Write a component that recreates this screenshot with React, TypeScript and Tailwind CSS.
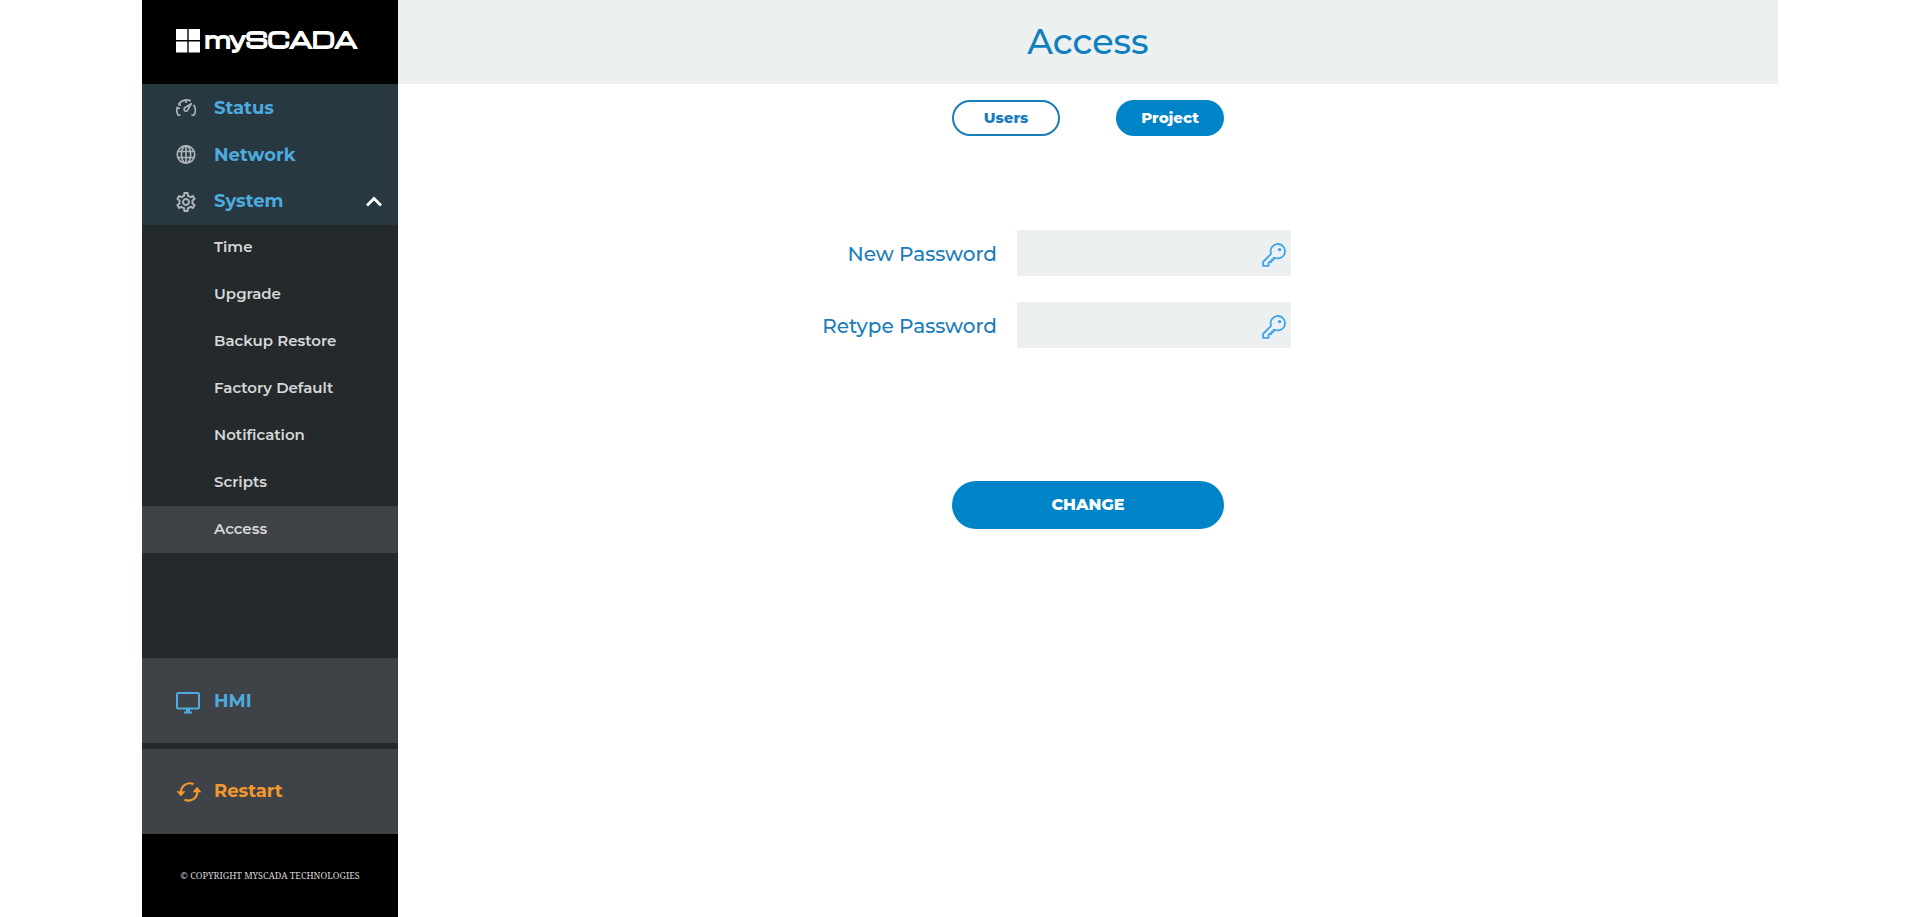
import { useState } from 'react';
import { MdOutlineSettings } from 'react-icons/md';

const SYSTEM_ITEMS = [
  'Time',
  'Upgrade',
  'Backup Restore',
  'Factory Default',
  'Notification',
  'Scripts',
  'Access',
];

const GaugeIcon = () => (
  <svg className="w-5 h-5" viewBox="0 0 20 20" fill="none" stroke="currentColor" strokeWidth="1.7" strokeLinecap="round">
    <path d="M4 17 2.4 17.4A9.2 9.2 0 0 1 1.2 9.4M2.8 6.2A9.2 9.2 0 0 1 14 2.6M18 7.4A9.2 9.2 0 0 1 17.6 17.4L16 17" />
    <path d="M10 2.2v2M1.2 10.2h2M2.8 6.2l1.4 1" />
    <path d="M15.4 5.6 11.6 12.2A1.9 1.9 0 1 1 8.8 9.7Z" strokeLinejoin="round" />
  </svg>
);

const GlobeIcon = () => (
  <svg className="w-5 h-5" viewBox="0 0 20 20" fill="none" stroke="currentColor" strokeWidth="1.7">
    <circle cx="10" cy="9.5" r="8.7" />
    <ellipse cx="10" cy="9.5" rx="4.6" ry="8.7" />
    <path d="M10 .8v17.4M1.8 6.5h16.4M1.8 12.5h16.4" />
  </svg>
);

const MonitorIcon = () => (
  <svg className="w-6 h-6" viewBox="0 0 24 24" fill="none" stroke="currentColor" strokeWidth="2">
    <rect x="1" y="3" width="22" height="15.5" rx="1" />
    <path d="M8 22.5h8" />
    <path d="M12 18v4" strokeWidth="4" />
  </svg>
);

const RestartIcon = () => (
  <svg className="w-6 h-6 overflow-visible" viewBox="0 0 24 24" fill="none" stroke="currentColor" strokeWidth="2.2">
    <path d="M17.5 4.2A8.8 8.8 0 0 0 4.9 11.8" />
    <path d="M8.5 19.6A8.8 8.8 0 0 0 21.3 12" />
    <path d="M.5 11.2h9L5 16.2ZM16.5 12.2h9L21 6.8Z" fill="currentColor" stroke="none" />
  </svg>
);

const KeyIcon = () => (
  <svg className="h-6 w-6" viewBox="0 0 24 24" fill="none" stroke="currentColor" strokeWidth="1.8" strokeLinejoin="round">
    <path d="M9.1 10.8A7.2 7.2 0 1 1 13.4 15H11.4V17H9.4V19H7.4L6.6 19.8V22.8H1V19Z" />
    <circle cx="17.6" cy="6.6" r="1.7" fill="currentColor" stroke="none" />
  </svg>
);

const ChevronIcon = () => (
  <svg className="w-4 h-4" viewBox="0 0 16 16" fill="none" stroke="currentColor" strokeWidth="2.8">
    <path d="M1 11.5 8 4.5 15 11.5" />
  </svg>
);

const Logo = () => (
  <a href="#home" className="flex h-[84px] items-center gap-[5px] bg-black pb-0.5 pl-[34px] text-white">
    <svg className="w-6 h-6 shrink-0" viewBox="0 0 24 24" fill="currentColor">
      <path d="M0 0h11.3v11H0zM12.7 0H24v11H12.7zM0 12.4h11.3v11H0zM12.7 12.4H24v11H12.7z" />
    </svg>
    <span className="pb-1 font-['Michroma','Orbitron','Audiowide','DejaVu_Sans',sans-serif] text-[21px] leading-6 font-bold [-webkit-text-stroke:1px_white]">
      mySCADA
    </span>
  </a>
);

interface NavLinkProps {
  label: string;
  icon: React.ReactNode;
}

const NavLink = ({ label, icon }: NavLinkProps) => (
  <a href={`#${label.toLowerCase()}`} className="flex h-[47px] items-center bg-[#283841] pt-px pl-[34px] text-[18px] font-bold text-[#4cabdf]">
    <span className="w-[38px] text-[#adb3b8]">{icon}</span>
    {label}
  </a>
);

const Sidebar = () => {
  const [open, setOpen] = useState(true);

  return (
    <aside className="flex w-64 shrink-0 flex-col bg-[#24292c]">
      <Logo />
      <nav className="flex-1">
        <NavLink label="Status" icon={<GaugeIcon />} />
        <NavLink label="Network" icon={<GlobeIcon />} />
        <button
          type="button"
          aria-expanded={open}
          onClick={() => setOpen(!open)}
          className="flex h-[47px] w-full items-center bg-[#283841] pr-4 pl-[34px] text-[18px] font-bold text-[#4cabdf]"
        >
          <span className="w-[38px] text-[#adb3b8]">
            <MdOutlineSettings className="-ml-0.5 h-6 w-6" />
          </span>
          System
          <span className="ml-auto text-white">
            <ChevronIcon />
          </span>
        </button>
        {open && (
          <ul className="-mt-px">
            {SYSTEM_ITEMS.map((item) => (
              <li key={item}>
                <a
                  href={`#${item.toLowerCase().replace(' ', '-')}`}
                  className={`flex h-[47px] items-center pl-[72px] text-[15px] font-semibold text-[#d6d8d9] ${item === 'Access' ? 'bg-[#3f4246]' : ''}`}
                >
                  {item}
                </a>
              </li>
            ))}
          </ul>
        )}
      </nav>
      <div className="flex flex-col gap-1.5">
        <a href="#hmi" className="flex h-[85px] items-center bg-[#3f4246] pt-0.5 pl-[34px] text-[18px] font-bold text-[#4cabdf]">
          <span className="w-[38px]">
            <MonitorIcon />
          </span>
          HMI
        </a>
        <button type="button" className="flex h-[85px] items-center bg-[#3f4246] pl-[34px] text-[18px] font-bold text-[#f2982f]">
          <span className="w-[38px]">
            <RestartIcon />
          </span>
          Restart
        </button>
      </div>
      <footer className="flex h-[83px] items-center justify-center bg-black font-['Noto_Serif','Liberation_Serif',serif] text-[9px] text-[#d6d8d9]">
        © COPYRIGHT MYSCADA TECHNOLOGIES
      </footer>
    </aside>
  );
};

interface PasswordRowProps {
  id: string;
  label: string;
}

const PasswordRow = ({ id, label }: PasswordRowProps) => (
  <div className="grid grid-cols-[619fr_761fr] items-center">
    <label htmlFor={id} className="pt-px pr-5 text-right text-xl font-medium text-[#1a7cb9]">
      {label}
    </label>
    <div className="relative w-[274px]">
      <input id={id} type="password" className="block h-[46px] w-full bg-[#ecf0f1] pr-10 pl-3 outline-none" />
      <span className="pointer-events-none absolute top-[13px] right-[5px] text-[#3fa5ea]">
        <KeyIcon />
      </span>
    </div>
  </div>
);

export default function App() {
  return (
    <div className="min-h-screen bg-white pl-1 font-['Montserrat','Inter',sans-serif]">
      <div className="mx-auto flex min-h-screen max-w-[1636px]">
        <Sidebar />
        <main className="flex-1">
          <header className="flex h-[84px] items-center justify-center bg-[#ecf0f1]">
            <h1 className="text-[35px] font-medium text-[#0f7fbf]">Access</h1>
          </header>
          <div className="flex justify-center gap-14 pt-4">
            <button type="button" className="h-9 w-[108px] rounded-full border-2 border-[#1a7cb9] text-[15px] font-extrabold text-[#1a7cb9]">
              Users
            </button>
            <button type="button" className="h-9 w-[108px] rounded-full bg-[#0084c8] text-[15px] font-extrabold text-white">
              Project
            </button>
          </div>
          <form className="pt-[94px]" onSubmit={(e) => e.preventDefault()}>
            <div className="flex flex-col gap-[26px]">
              <PasswordRow id="new-password" label="New Password" />
              <PasswordRow id="retype-password" label="Retype Password" />
            </div>
            <div className="flex justify-center pt-[133px]">
              <button type="submit" className="h-12 w-[272px] rounded-full bg-[#0084c8] text-base font-extrabold text-white">
                CHANGE
              </button>
            </div>
          </form>
        </main>
      </div>
    </div>
  );
}
